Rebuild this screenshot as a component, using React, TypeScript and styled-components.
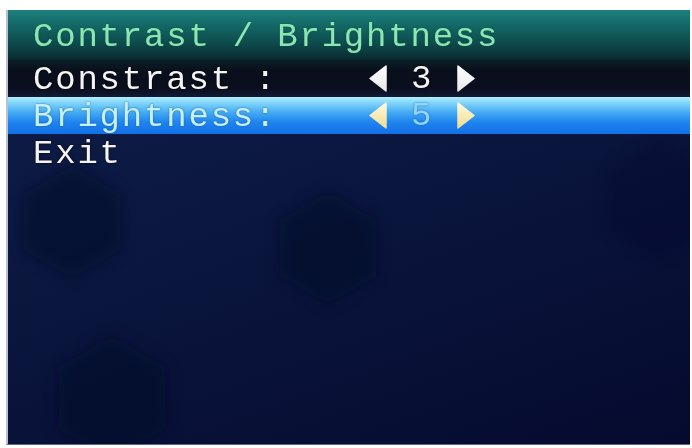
import React from "react"
import styled, { createGlobalStyle } from "styled-components"

// Global
const GlobalStyle = createGlobalStyle`
  body {
    margin: 0;
    background: #ffffff;
  }
`

// Components
const Screen = styled.div`
  position: relative;
  margin: 10px 0 0 6px;
  width: 684px;
  height: 435px;
  overflow: hidden;
  box-sizing: border-box;
  border-left: 2px solid #b9c0d2;
  border-bottom: 1px solid #5a6690;
  background: linear-gradient(160deg, #0f1d48 0%, #0c1942 30%, #09133a 60%, #050a2e 100%);
  font-family: "Liberation Mono", "DejaVu Sans Mono", monospace;
  font-size: 34px;
  letter-spacing: 1.8px;
`

const Backdrop = styled.svg`
  position: absolute;
  inset: 0;
  pointer-events: none;
`

const Content = styled.div`
  position: relative;
  display: flex;
  flex-direction: column;
`

const Header = styled.div`
  height: 50px;
  box-sizing: border-box;
  padding: 5px 0 0 25px;
  line-height: 45px;
  color: #8ae6b2;
  text-shadow: 0 0 2px rgba(20, 80, 60, 0.8);
  background: linear-gradient(180deg, #1d807e 0%, #146866 30%, #0e4c4e 65%, #0a3438 90%, #09282e 100%);
`

const Row = styled.div<{ $active?: boolean; $band?: boolean }>`
  display: flex;
  align-items: center;
  height: 37px;
  box-sizing: border-box;
  padding: 3px 0 0 25px;
  line-height: 34px;
  color: ${p => (p.$active ? "#c4f0f6" : "#f4f4f4")};
  text-shadow: ${p => (p.$active ? "0 0 2px rgba(30, 90, 160, 0.9)" : "0 0 2px #000")};
  background: ${p =>
    p.$active
      ? "linear-gradient(180deg, #b4effc 0%, #86d8fa 14%, #44aaf2 42%, #1f84ee 68%, #1170e6 100%)"
      : p.$band
      ? "linear-gradient(180deg, #0a1e24 0%, #090f1c 30%, #0a0e1e 75%, #121a32 100%)"
      : "transparent"};
`

const Label = styled.span`
  flex-shrink: 0;
  width: 336px;
  white-space: pre;
`

const Value = styled.div`
  display: flex;
  align-items: center;
  gap: 24px;
  margin-top: -3px;
`

const Digit = styled.span<{ $active?: boolean }>`
  width: 22px;
  text-align: center;
  color: ${p => (p.$active ? "#8ed6ff" : "#f4f4f4")};
`

const ArrowIcon = styled.svg`
  display: block;
  width: 18px;
  height: 27px;
`

// Parts
const Arrow: React.FC<{ dir: "left" | "right"; active?: boolean }> = ({ dir, active }) => {
  const id = `arr-${dir}-${active ? "a" : "n"}`
  const points = dir === "left" ? "1,13.5 17,1 17,26" : "1,1 17,13.5 1,26"
  return (
    <ArrowIcon viewBox="0 0 18 27">
      <defs>
        <linearGradient id={id} x1="0" y1="0" x2="0" y2="1">
          <stop offset="0" stopColor={active ? "#fffbe0" : "#ffffff"} />
          <stop offset="1" stopColor={active ? "#efdc8e" : "#e8e8e8"} />
        </linearGradient>
      </defs>
      <polygon points={points} fill={`url(#${id})`} stroke={`url(#${id})`} strokeLinejoin="round" strokeWidth="1.5" />
    </ArrowIcon>
  )
}

const hexPoints = (cx: number, cy: number, r: number) =>
  Array.from({ length: 6 }, (_, i) => {
    const a = (Math.PI / 3) * i + Math.PI / 6
    return `${cx + r * Math.cos(a)},${cy + r * Math.sin(a)}`
  }).join(" ")

const Hexagons: React.FC = () => (
  <Backdrop width="684" height="435">
    <defs>
      <filter id="soft" x="-30%" y="-30%" width="160%" height="160%">
        <feGaussianBlur stdDeviation="7" />
      </filter>
    </defs>
    <g filter="url(#soft)" fill="#050a28" opacity="0.5">
      <polygon points={hexPoints(64, 212, 56)} />
      <polygon points={hexPoints(320, 238, 56)} />
      <polygon points={hexPoints(104, 388, 62)} />
      <polygon points={hexPoints(650, 190, 60)} opacity="0.5" />
    </g>
  </Backdrop>
)

interface SettingProps {
  label: string
  value: number
  active?: boolean
}

const Setting: React.FC<SettingProps> = ({ label, value, active }) => (
  <Row $active={active} $band={!active}>
    <Label>{label}</Label>
    <Value>
      <Arrow dir="left" active={active} />
      <Digit $active={active}>{value}</Digit>
      <Arrow dir="right" active={active} />
    </Value>
  </Row>
)

// Page
const App: React.FC = () => {
  return (
    <>
      <GlobalStyle />
      <Screen>
        <Hexagons />
        <Content>
          <Header>Contrast / Brightness</Header>
          <Setting label="Constrast :" value={3} />
          <Setting label="Brightness:" value={5} active />
          <Row>Exit</Row>
        </Content>
      </Screen>
    </>
  )
}

export default App
